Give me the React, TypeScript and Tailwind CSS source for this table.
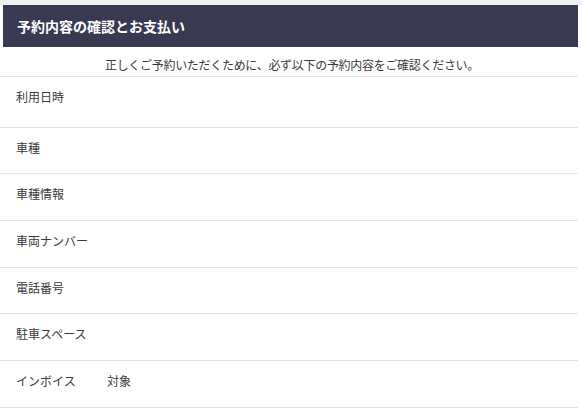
import React from 'react';

const rows: { label: string; value?: string; h: string }[] = [
  { label: '利用日時', h: 'h-[51px]' },
  { label: '車種', h: 'h-[46px]' },
  { label: '車種情報', h: 'h-[47px]' },
  { label: '車両ナンバー', h: 'h-[47px]' },
  { label: '電話番号', h: 'h-[46px]' },
  { label: '駐車スペース', h: 'h-[47px]' },
  { label: 'インボイス', value: '対象', h: 'h-[47px]' },
];

function App() {
  return (
    <div
      className="min-h-screen bg-white text-[#3a3a3a]"
      style={{ fontFamily: '"Noto Sans CJK JP", "Noto Sans", sans-serif' }}
    >
      <div className="h-[5px] bg-[#f0f0f3]" />
      <div className="w-[578px]">
        <div className="ml-[3px] h-[42px] bg-[#393952] flex items-center pl-[14px]">
          <h1 className="text-[14px] font-bold text-white">予約内容の確認とお支払い</h1>
        </div>
        <p className="pt-[10px] pb-[2px] h-[30px] pl-[6px] text-center text-[12px] leading-4 tracking-[-0.3px] border-b border-[#e2e2e2]">
          正しくご予約いただくために、必ず以下の予約内容をご確認ください。
        </p>
        {rows.map((r) => (
          <div key={r.label} className={`${r.h} border-b border-[#e2e2e2] flex pt-[12px] pl-[16px] text-[12px] leading-4`}>
            <span className="w-[91px]">{r.label}</span>
            {r.value && <span>{r.value}</span>}
          </div>
        ))}
      </div>
    </div>
  );
}

export default App;
